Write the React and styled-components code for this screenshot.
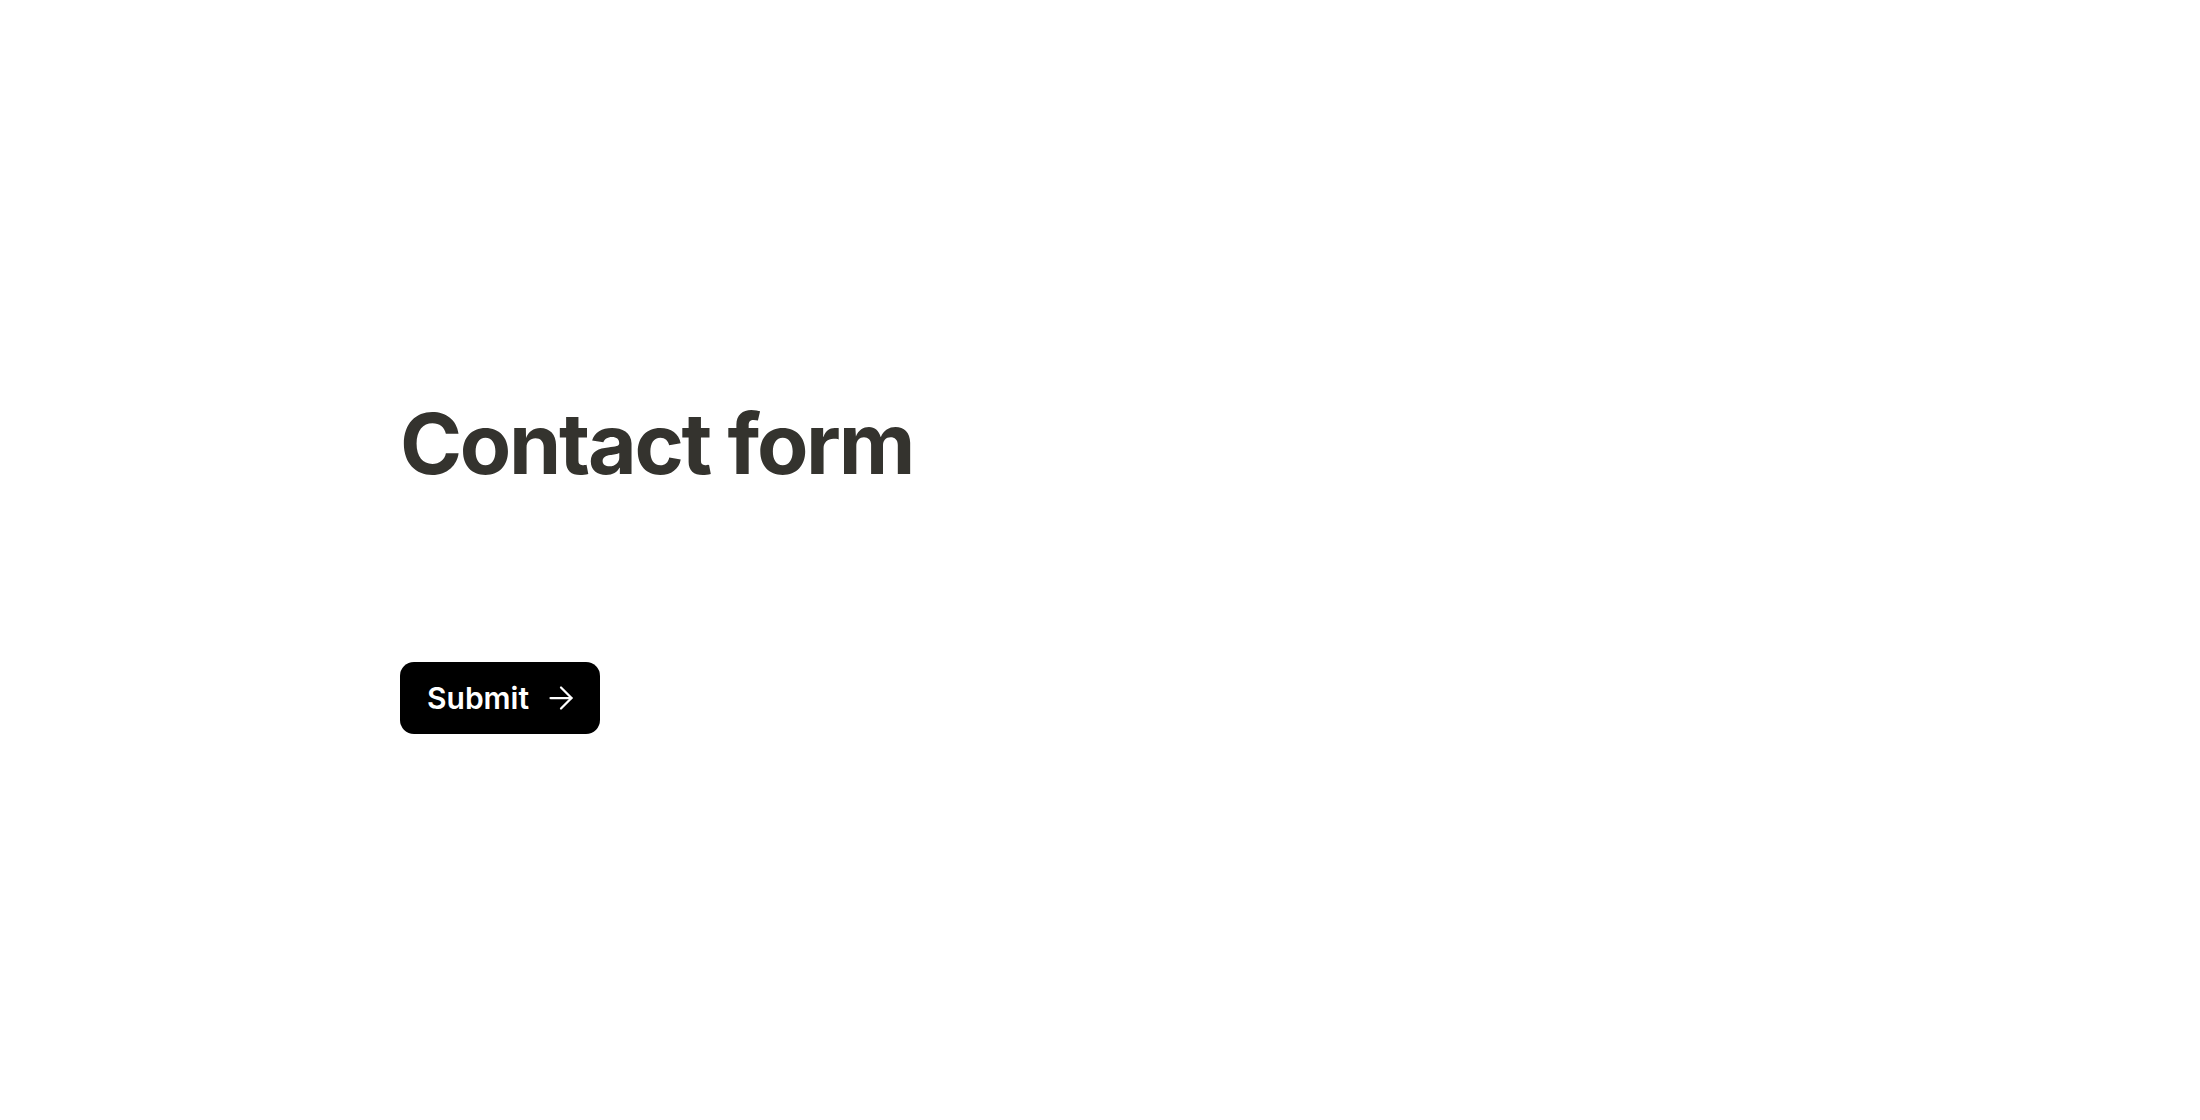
import React from "react";
import styled, { createGlobalStyle } from "styled-components";

const Global = createGlobalStyle`
  html, body { margin: 0; padding: 0; background: #ffffff; }
  body { font-family: Inter, "Noto Sans", sans-serif; }
`;

const Page = styled.main`
  box-sizing: border-box;
  min-height: 100vh;
  padding-top: 8px;
  display: flex;
  align-items: center;
  justify-content: center;
`;

const Container = styled.div`
  width: 1400px;
  display: flex;
  flex-direction: column;
  align-items: flex-start;
`;

const Title = styled.h1`
  margin: 0;
  font-family: Inter, sans-serif;
  font-weight: 700;
  font-size: 84px;
  line-height: 1.2;
  color: #34332e;
  letter-spacing: -2.3px;
`;

const Form = styled.form`
  margin-top: 168px;
`;

const Button = styled.button`
  display: inline-flex;
  align-items: center;
  gap: 14px;
  height: 72px;
  padding: 0 21px 0 27px;
  background: #000;
  color: #fff;
  border: none;
  border-radius: 14px;
  font-family: Inter, sans-serif;
  font-weight: 600;
  font-size: 30px;
  cursor: pointer;
`;

const Arrow = () => (
  <svg width="36" height="36" viewBox="0 0 24 24" fill="none" stroke="currentColor" strokeWidth="1.5" strokeLinecap="round" strokeLinejoin="round">
    <path d="M5 12h14" />
    <path d="m12 5 7 7-7 7" />
  </svg>
);

export default function App() {
  return (
    <>
      <Global />
      <Page>
        <Container>
          <Title>Contact form</Title>
          <Form onSubmit={(e) => e.preventDefault()}>
            <Button type="submit">
              Submit
              <Arrow />
            </Button>
          </Form>
        </Container>
      </Page>
    </>
  );
}
